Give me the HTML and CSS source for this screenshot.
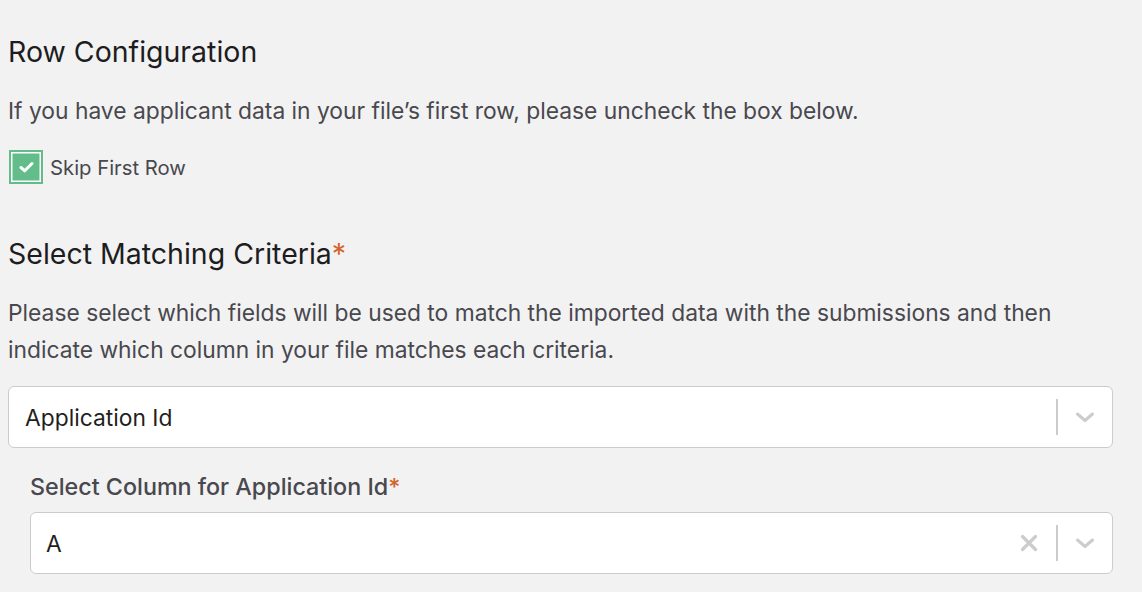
FILE: index.html
```html
<!DOCTYPE html>
<html>
<head>
    <title>Import Configuration</title>
    <meta name="viewport" content="width=device-width, initial-scale=1">
    <link rel="stylesheet" href="styles.css">
</head>
<body>

    <section class="block">
        <h2>Row Configuration</h2>
        <p class="hint">If you have applicant data in your file’s first row, please uncheck the box below.</p>
        <label class="check">
            <span class="box">
                <svg width="15" height="12" viewBox="0 0 15 12">
                    <path d="M2 6.5 L5.8 9.8 L13 2.5" fill="none" stroke="#fff" stroke-width="3" stroke-linecap="round" stroke-linejoin="round"/>
                </svg>
            </span>
            Skip First Row
        </label>
    </section>

    <section class="block">
        <h2>Select Matching Criteria<span class="req">*</span></h2>
        <p class="hint">Please select which fields will be used to match the imported data with the submissions and then indicate which column in your file matches each criteria.</p>

        <div class="select">
            <span class="value">Application Id</span>
            <span class="sep"></span>
            <span class="chev">
                <svg width="20" height="20" viewBox="0 0 20 20"><path d="M2.5 7 L10 13.5 L17.5 7" fill="none" stroke="#ccc" stroke-width="3" stroke-linecap="round" stroke-linejoin="round"/></svg>
            </span>
        </div>

        <div class="sub">
            <div class="sub-label">Select Column for Application Id<span class="req">*</span></div>
            <div class="select">
                <span class="value">A</span>
                <span class="clear">
                    <svg width="20" height="20" viewBox="0 0 20 20"><path d="M3.5 3.5 L16.5 16.5 M16.5 3.5 L3.5 16.5" fill="none" stroke="#ccc" stroke-width="3.2" stroke-linecap="round"/></svg>
                </span>
                <span class="sep"></span>
                <span class="chev">
                    <svg width="20" height="20" viewBox="0 0 20 20"><path d="M2.5 7 L10 13.5 L17.5 7" fill="none" stroke="#ccc" stroke-width="3" stroke-linecap="round" stroke-linejoin="round"/></svg>
                </span>
            </div>
        </div>
    </section>

</body>
</html>
```

FILE: styles.css
```css
html, body {
    margin: 0;
}
body {
    font-family: Inter, "Noto Sans", sans-serif;
    background: #f2f2f2;
    color: #48484e;
    padding: 0 29px 0 8px;
}

h2 {
    font-size: 28.5px;
    font-weight: 400;
    color: #1d1d1f;
    margin: 0;
    line-height: 36px;
}

.block:first-child h2 {
    padding-top: 34px;
}

.block + .block {
    margin-top: 52px;
}

.hint {
    font-size: 22.8px;
    line-height: 37px;
    margin: 22px 0 0;
}

.req {
    color: #d2652d;
}

.check {
    display: flex;
    align-items: center;
    gap: 7px;
    font-size: 20.3px;
    margin-top: 21px;
}

.box {
    width: 34px;
    height: 34px;
    margin-left: 1px;
    box-sizing: border-box;
    background: #62bd8b;
    border: 2px solid #62bd8b;
    box-shadow: inset 0 0 0 1.5px #fff;
    display: flex;
    align-items: center;
    justify-content: center;
}

.select {
    display: flex;
    align-items: center;
    height: 62px;
    box-sizing: border-box;
    background: #fff;
    border: 1px solid #ccc;
    border-radius: 6px;
    margin-top: 18px;
    padding-left: 16px;
    font-size: 22.8px;
    color: #1f1f22;
}

.value {
    flex: 1;
}

.clear {
    display: flex;
    padding: 0 17px 0 8px;
}

.sep {
    width: 2px;
    height: 36px;
    background: #ccc;
}

.chev {
    display: flex;
    padding: 0 17px 0 17px;
}

.sub {
    padding-left: 22px;
    margin-top: 25px;
}

.sub-label {
    font-size: 23.3px;
    line-height: 28px;
    font-weight: 500;
    color: #48484e;
}

.sub .select {
    margin-top: 11px;
    padding-left: 15px;
}
```
